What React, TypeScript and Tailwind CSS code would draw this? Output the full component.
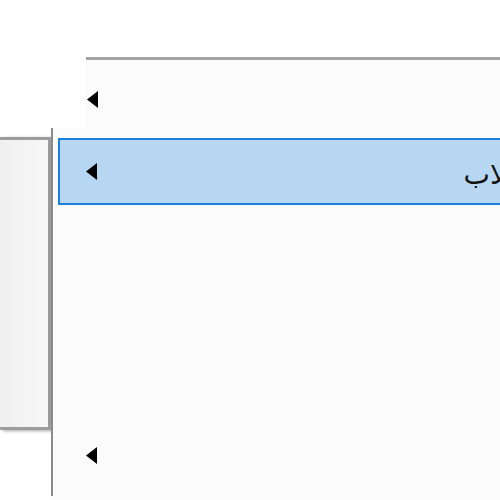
const Arrow = () => (
  <svg width="13" height="19" viewBox="0 0 13 19" className="block shrink-0">
    <polygon points="12,1 12,18 1,9.5" fill="#000" />
  </svg>
);

export default function App() {
  return (
    <main className="w-[500px] h-[500px] overflow-hidden bg-white" style={{ fontFamily: '"DejaVu Sans", "Noto Sans", sans-serif' }}>
      {/* upper menu */}
      <div className="h-[57px]" />
      <div className="ml-[86px] h-[71px] border-t-[3px] border-[#a3a3a3] bg-[#fbfbfb] flex items-start pt-[30px]">
        <Arrow />
      </div>

      <div className="flex h-[372px]">
        {/* left panel column */}
        <div className="w-[51px] shrink-0 flex flex-col">
          <div className="h-[9px]" />
          <div className="h-[293px] border-t-[3px] border-r-[3px] border-b-[3px] border-[#9c9c9c] bg-gradient-to-r from-[#f0f0f0] to-[#f7f7f7] shadow-[3px_1px_3px_rgba(0,0,0,0.35)]" />
        </div>
        {/* divider */}
        <div className="w-[2px] shrink-0 h-[368px] bg-[#8a8a8a]" />
        {/* submenu */}
        <div className="w-[447px] shrink-0 bg-[#fbfbfb] flex flex-col pl-[5px]">
          <div className="h-[10px]" />
          <div className="h-[67px] w-[460px] shrink-0 border-2 border-[#1b80dd] bg-[#b6d6f2] flex items-center pl-[25px]">
            <Arrow />
            <div className="flex-1" />
            <span dir="rtl" className="text-[28px] leading-none text-[#111] mr-[-4px] mt-[6px]">كلاب</span>
          </div>
          <div className="flex-1" />
          <div className="pl-[27px] pb-[35px]">
            <Arrow />
          </div>
        </div>
      </div>
    </main>
  );
}
